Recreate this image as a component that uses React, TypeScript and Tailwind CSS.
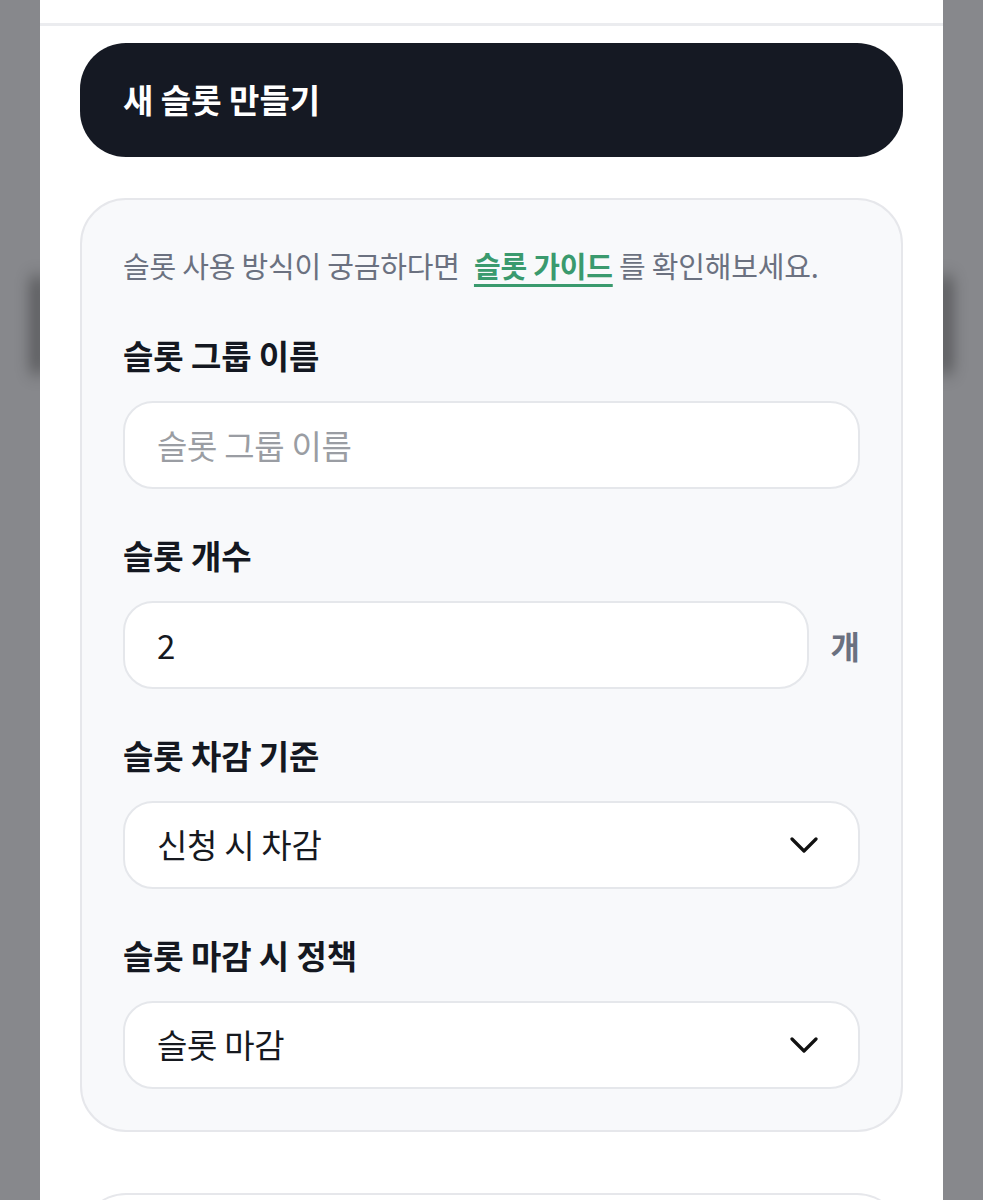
const font = { fontFamily: '"Noto Sans CJK KR", "Noto Sans", sans-serif' };

const Field = ({ label, first, children }: { label: string; first?: boolean; children: React.ReactNode }) => (
  <div className={first ? "mt-[49px]" : "mt-[45px]"}>
    <div className="text-[33px] font-bold leading-[42px] tracking-[-0.1px] text-[#141821]">{label}</div>
    <div className="mt-[25px]">{children}</div>
  </div>
);

const Chevron = () => (
  <svg width="28" height="16" viewBox="0 0 28 16" fill="none">
    <path d="M2 2 L14 14 L26 2" stroke="#111" strokeWidth="3.2" strokeLinecap="round" strokeLinejoin="round" />
  </svg>
);

const Select = ({ value }: { value: string }) => (
  <div className="flex h-[88px] items-center justify-between rounded-[30px] border-2 border-[#e5e7eb] bg-white pl-[32px] pr-[40px]">
    <span className="text-[33px] tracking-[-0.3px] text-[#16191f]">{value}</span>
    <Chevron />
  </div>
);

export default function App() {
  return (
    <div className="min-h-[1200px] overflow-hidden bg-[#87888c]" style={font}>
      <div className="relative mx-[40px]">
        {/* side shadows */}
        <div className="absolute -left-[8px] top-[275px] h-[100px] w-[12px] rounded-full bg-black/45 blur-[8px]" />
        <div className="absolute -right-[8px] top-[275px] h-[100px] w-[12px] rounded-full bg-black/45 blur-[8px]" />

        <div className="relative min-h-[1200px] bg-white px-[40px]">
          <div className="-mx-[40px] h-[26px] border-b-[3px] border-[#ebecef]" />

          <button className="mt-[17px] flex h-[114px] w-full items-center rounded-[46px] bg-[#151923] px-[43px] text-left text-[33px] font-bold text-white">
            새 슬롯 만들기
          </button>

          <div className="mt-[41px] rounded-[46px] border-2 border-[#e6e7eb] bg-[#f8f9fb] px-[41px] pb-[41px] pt-[45px]">
            <p className="text-[29px] leading-[40px] tracking-[-0.2px] text-[#6b7180]">
              슬롯 사용 방식이 궁금하다면{" "}
              <a className="ml-[8px] font-bold text-[#3a9a6e] underline decoration-[3px] underline-offset-[6px]">
                슬롯 가이드
              </a>{" "}
              를 확인해보세요.
            </p>

            <Field label="슬롯 그룹 이름" first>
              <input
                placeholder="슬롯 그룹 이름"
                className="h-[88px] w-full rounded-[30px] border-2 border-[#e5e7eb] bg-white px-[32px] text-[33px] tracking-[-0.3px] text-[#16191f] outline-none placeholder:text-[#9a9da3]"
              />
            </Field>

            <Field label="슬롯 개수">
              <div className="flex items-center gap-[22px]">
                <input
                  defaultValue="2"
                  className="h-[88px] min-w-0 flex-1 rounded-[30px] border-2 border-[#e5e7eb] bg-white px-[32px] text-[33px] text-[#16191f] outline-none"
                />
                <span className="text-[32px] font-bold text-[#6b7180]">개</span>
              </div>
            </Field>

            <Field label="슬롯 차감 기준">
              <Select value="신청 시 차감" />
            </Field>

            <Field label="슬롯 마감 시 정책">
              <Select value="슬롯 마감" />
            </Field>
          </div>

          <div className="mt-[61px] h-[120px] rounded-t-[46px] border-2 border-b-0 border-[#e6e7eb] bg-white" />
        </div>
      </div>
    </div>
  );
}
